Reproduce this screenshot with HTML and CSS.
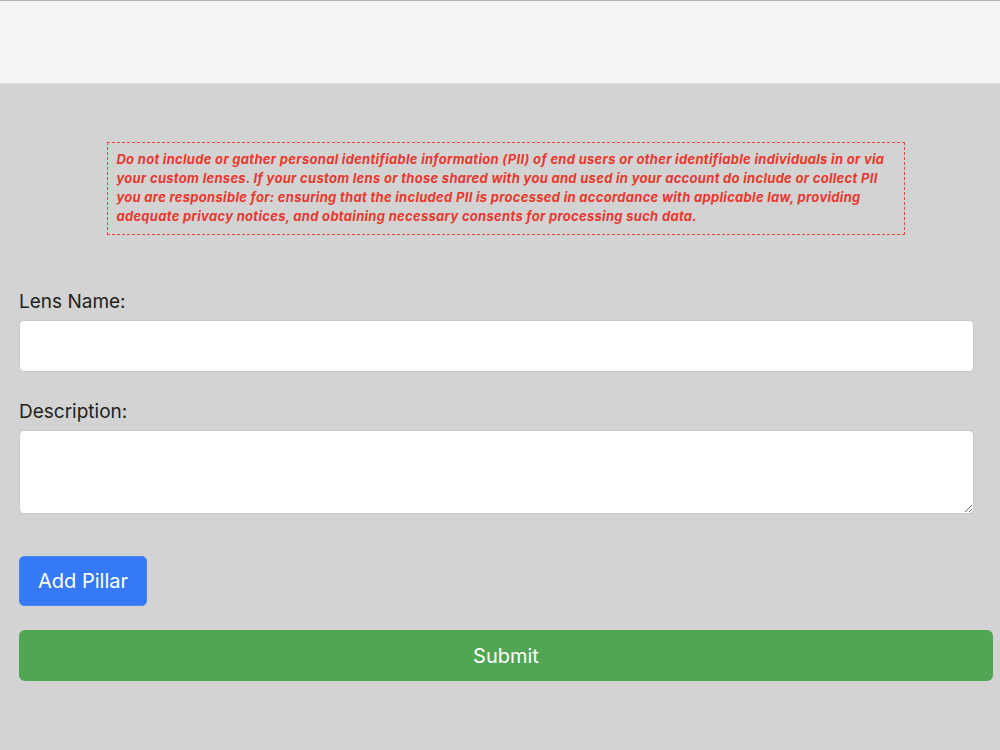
FILE: index.html
```html
<!DOCTYPE html>
<html lang="en">
<head>
  <meta charset="UTF-8">
  <title>Custom Lens</title>
  <link rel="stylesheet" href="styles.css">
</head>
<body>

  <header class="topbar"></header>

  <main class="page">
    <p class="notice">
      Do not include or gather personal identifiable information (PII) of end users or other identifiable individuals in or via
      your custom lenses. If your custom lens or those shared with you and used in your account do include or collect PII
      you are responsible for: ensuring that the included PII is processed in accordance with applicable law, providing
      adequate privacy notices, and obtaining necessary consents for processing such data.
    </p>

    <form class="lens-form" id="lensForm">
      <label for="lensName">Lens Name:</label>
      <input type="text" id="lensName" class="field">

      <label for="lensDesc">Description:</label>
      <textarea id="lensDesc" class="field field-area"></textarea>

      <button type="button" class="add-btn">Add Pillar</button>
      <button type="submit" class="submit-btn">Submit</button>
    </form>
  </main>

</body>
</html>
```

FILE: styles.css
```css
body {
  margin: 0;
  font-family: Inter, "Noto Sans", Arial, sans-serif;
  background: #d3d3d3;
  color: #222;
}

.topbar {
  height: 82px;
  background: #f4f4f4;
  border-top: 1px solid #b2b2b8;
  border-bottom: 1px solid #e2e2e2;
}

.page {
  padding: 0 7px 40px 19px;
}

.notice {
  width: 80%;
  margin: 58px auto 0;
  padding: 7px 8px 8px;
  border: 1px dashed #e8463a;
  color: #e8392e;
  font-size: 13px;
  line-height: 19px;
  letter-spacing: 0.3px;
  font-weight: bold;
  font-style: italic;
}

.lens-form {
  margin-top: 56px;
}

.lens-form label {
  display: block;
  font-size: 19px;
  line-height: 22px;
  margin-bottom: 7px;
}

.field {
  display: block;
  box-sizing: border-box;
  width: 98%;
  height: 52px;
  margin: 0 0 29px;
  padding: 8px 10px;
  background: #fff;
  border: 1px solid #c9c9c9;
  border-radius: 5px;
  font: inherit;
}

.field-area {
  height: 84px;
  margin-bottom: 0;
  resize: vertical;
}

.add-btn {
  display: block;
  width: 128px;
  height: 50px;
  margin-top: 42px;
  background: #3579f6;
  color: #fff;
  border: 1px solid #4a86f0;
  border-radius: 5px;
  font-family: inherit;
  font-size: 20px;
}

.submit-btn {
  display: block;
  width: 100%;
  height: 51px;
  margin-top: 24px;
  background: #52a552;
  color: #fff;
  border: none;
  border-radius: 6px;
  font-family: inherit;
  font-size: 20px;
}
```
